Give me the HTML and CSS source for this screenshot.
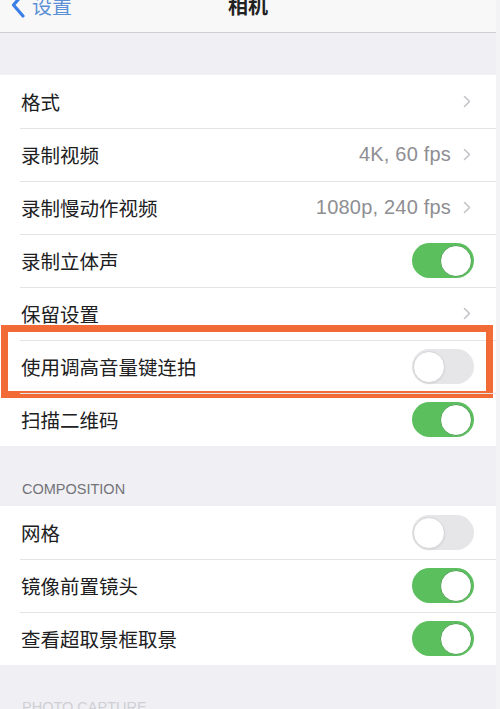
FILE: index.html
```html
<!DOCTYPE html>
<html lang="zh-CN">
<head>
<meta charset="utf-8">
<title>相机</title>
<link rel="stylesheet" href="styles.css">
</head>
<body>
<div class="page">
  <header class="nav">
    <div class="nav-row">
      <div class="back">
        <svg class="back-icon" width="16" height="26" viewBox="0 0 16 26"><polyline points="13,2 3.5,13 13,24" fill="none" stroke="#3a7ee6" stroke-width="3.2" stroke-linecap="round" stroke-linejoin="round"/></svg>
        <span class="back-text">设置</span>
      </div>
      <div class="title">相机</div>
      <div class="spacer"></div>
    </div>
  </header>

  <div class="gap-top"></div>

  <section class="group">
    <div class="row"><span class="label">格式</span><span class="right"><svg class="chev" width="8" height="13" viewBox="0 0 8 13"><polyline points="1.5,1.5 6.5,6.5 1.5,11.5" fill="none" stroke="#c4c4c8" stroke-width="1.6" stroke-linecap="round" stroke-linejoin="round"/></svg></span></div>
    <div class="row"><span class="label">录制视频</span><span class="right"><span class="value">4K, 60 fps</span><svg class="chev" width="8" height="13" viewBox="0 0 8 13"><polyline points="1.5,1.5 6.5,6.5 1.5,11.5" fill="none" stroke="#c4c4c8" stroke-width="1.6" stroke-linecap="round" stroke-linejoin="round"/></svg></span></div>
    <div class="row"><span class="label">录制慢动作视频</span><span class="right"><span class="value">1080p, 240 fps</span><svg class="chev" width="8" height="13" viewBox="0 0 8 13"><polyline points="1.5,1.5 6.5,6.5 1.5,11.5" fill="none" stroke="#c4c4c8" stroke-width="1.6" stroke-linecap="round" stroke-linejoin="round"/></svg></span></div>
    <div class="row"><span class="label">录制立体声</span><span class="switch on"><span class="knob"></span></span></div>
    <div class="row"><span class="label">保留设置</span><span class="right"><svg class="chev" width="8" height="13" viewBox="0 0 8 13"><polyline points="1.5,1.5 6.5,6.5 1.5,11.5" fill="none" stroke="#c4c4c8" stroke-width="1.6" stroke-linecap="round" stroke-linejoin="round"/></svg></span></div>
    <div class="row highlighted"><span class="label">使用调高音量键连拍</span><span class="switch off"><span class="knob"></span></span><span class="callout"></span></div>
    <div class="row"><span class="label">扫描二维码</span><span class="switch on"><span class="knob"></span></span></div>
  </section>

  <div class="section-header">COMPOSITION</div>

  <section class="group">
    <div class="row"><span class="label">网格</span><span class="switch off"><span class="knob"></span></span></div>
    <div class="row"><span class="label">镜像前置镜头</span><span class="switch on"><span class="knob"></span></span></div>
    <div class="row"><span class="label">查看超取景框取景</span><span class="switch on"><span class="knob"></span></span></div>
  </section>

  <div class="section-header bottom">PHOTO CAPTURE</div>
</div>
</body>
</html>
```

FILE: styles.css
```css
html, body {
  margin: 0;
  padding: 0;
}
body {
  background: #f3f3f6;
  font-family: "Noto Sans CJK SC", "Noto Sans", "Liberation Sans", sans-serif;
  color: #1c1c1e;
  overflow: hidden;
  height: 709px;
}
.page {
  width: 496px;
  background: #efeff4;
  min-height: 709px;
}
.nav {
  height: 32px;
  background: #f8f8f9;
  border-bottom: 1px solid #cfcfd3;
  overflow: hidden;
}
.nav-row {
  display: flex;
  align-items: center;
  height: 28px;
  margin-top: -9px;
}
.back {
  width: 120px;
  display: flex;
  align-items: center;
  padding-left: 10px;
  box-sizing: border-box;
}
.back-icon {
  display: block;
}
.back-text {
  margin-left: 6px;
  color: #5b8fd6;
  font-size: 20px;
}
.title {
  flex: 1;
  text-align: center;
  font-size: 20px;
  font-weight: 700;
  color: #222;
}
.spacer {
  width: 120px;
}
.gap-top {
  height: 42px;
}
.group {
  background: #ffffff;
}
.row {
  position: relative;
  height: 53px;
  display: flex;
  align-items: center;
  justify-content: space-between;
  padding: 0 22px 0 21px;
  box-sizing: border-box;
}
.row + .row::before {
  content: "";
  position: absolute;
  top: 0;
  left: 20px;
  right: 0;
  height: 1px;
  background: #e4e4e8;
}
.label {
  font-size: 19.5px;
  color: #202022;
}
.right {
  display: flex;
  align-items: center;
  gap: 12px;
  padding-right: 3px;
}
.value {
  font-family: "Liberation Sans", "Noto Sans", sans-serif;
  font-size: 20px;
  letter-spacing: 0.2px;
  color: #8e8e93;
}
.chev {
  display: block;
}
.switch {
  position: relative;
  width: 62px;
  height: 35px;
  border-radius: 18px;
  box-sizing: border-box;
  display: flex;
  align-items: center;
}
.switch.on {
  background: #5bbf5e;
  justify-content: flex-end;
  padding-right: 2px;
}
.switch.off {
  background: #e6e6e9;
  justify-content: flex-start;
  padding-left: 1px;
}
.knob {
  width: 32px;
  height: 32px;
  border-radius: 50%;
  background: #ffffff;
  box-sizing: border-box;
}
.switch.on .knob {
  border: 1.5px solid #4ea352;
}
.switch.off .knob {
  border: 1.5px solid #d6d6da;
  box-shadow: 0 1px 2px rgba(0,0,0,0.08);
}
.callout {
  position: absolute;
  top: -15px;
  bottom: -5px;
  left: 1px;
  right: 3px;
  border: 7px solid #f26a36;
  pointer-events: none;
}
.section-header {
  height: 60px;
  box-sizing: border-box;
  padding: 34px 22px 0;
  font-family: "Liberation Sans", "Noto Sans", sans-serif;
  font-size: 14.5px;
  line-height: 18px;
  color: #737378;
}
.section-header.bottom {
  padding-top: 33px;
  color: #d0d0d4;
}
```
